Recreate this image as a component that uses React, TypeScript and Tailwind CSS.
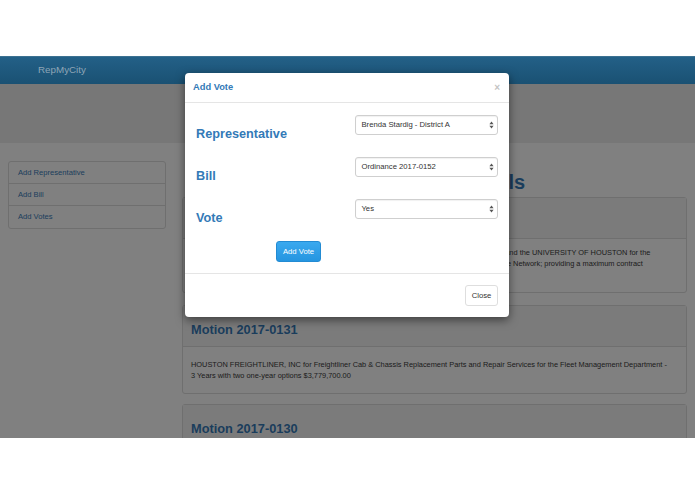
import React from "react";

const font = { fontFamily: '"Liberation Sans", Arial, sans-serif' };

function Arrows() {
  return (
    <svg width="5" height="8" viewBox="0 0 5 8" className="shrink-0">
      <path d="M2.5 0.5 L4.6 3.2 L0.4 3.2 Z" fill="#555" />
      <path d="M2.5 7.5 L4.6 4.8 L0.4 4.8 Z" fill="#555" />
    </svg>
  );
}

function Select({ value }: { value: string }) {
  return (
    <div className="w-[143px] h-[20px] border border-[#cfcfcf] rounded-[3px] bg-white shadow-[inset_0_1px_1px_rgba(0,0,0,0.06)] flex items-center justify-between pl-[5px] pr-[3px] text-[7.7px] text-[#333]">
      <span>{value}</span>
      <Arrows />
    </div>
  );
}

function FormRow({ label, value }: { label: string; value: string }) {
  return (
    <div className="h-[42px] flex items-start">
      <div className="w-[160px] pt-[12px] text-[12.7px] leading-[14px] font-bold text-[#337ab7]">{label}</div>
      <Select value={value} />
    </div>
  );
}

function Card({
  title,
  lines,
  bodyPt,
  className,
}: {
  title: string;
  lines: string[];
  bodyPt: string;
  className?: string;
}) {
  return (
    <div className={"border border-[#6f6f6f] rounded-[3px] bg-[#808080] " + (className ?? "")}>
      <div className="h-[41px] bg-[#7b7b7b] border-b border-[#6f6f6f] px-[8px] pt-[17px]">
        <div className="text-[12.8px] leading-[14px] font-bold text-[#1a3d5c]">{title}</div>
      </div>
      <div className={"px-[8px] pb-[12px] text-[7.4px] leading-[11px] text-[#1a1a1a]" + " " + bodyPt}>
        {lines.map((l, i) => (
          <div key={i} className="whitespace-nowrap">{l}</div>
        ))}
      </div>
    </div>
  );
}

export default function App() {
  return (
    <div className="w-[695px] h-[494px] bg-white flex flex-col overflow-hidden" style={font}>
      <div className="h-[56px] shrink-0" />
      <div className="h-[382px] relative overflow-hidden bg-[#808080] shrink-0">
        {/* navbar */}
        <div className="h-[28px] bg-gradient-to-b from-[#236087] to-[#1a5173] border-t border-[#3c7191] flex items-center pl-[38px]">
          <span className="text-[9.8px] text-[#8ea5b6]">RepMyCity</span>
        </div>
        {/* jumbotron */}
        <div className="h-[59px] bg-[#777777]" />
        {/* content */}
        <div className="flex pl-[8px] pr-[8px]">
          <div className="w-[158px] mt-[18px] shrink-0">
            <div className="border border-[#6f6f6f] rounded-[3px] text-[7.6px] text-[#1a3d5c]">
              <div className="h-[22px] flex items-center pl-[9px] border-b border-[#6f6f6f]">Add Representative</div>
              <div className="h-[22px] flex items-center pl-[9px] border-b border-[#6f6f6f]">Add Bill</div>
              <div className="h-[22px] flex items-center pl-[9px]">Add Votes</div>
            </div>
          </div>
          <div className="ml-[16px] w-[505px] shrink-0">
            <div className="mt-[28px] h-[22px] leading-[22px] text-[20px] font-bold text-[#1a3d5c] pl-[222px] whitespace-nowrap">
              Council Bills
            </div>
            <Card
              className="mt-[4px]"
              title="Ordinance 2017-0152"
              bodyPt="pt-[8px]"
              lines={[
                "AN ORDINANCE approving and authorizing Interlocal Agreements between the City of Houston and the UNIVERSITY OF HOUSTON for the",
                "Houston-Galveston Area Regional Radio Fire and Emergency Medical Services City Interoperable Network; providing a maximum contract",
                "amount - $1,450,000.00",
              ]}
            />
            <Card
              className="mt-[12px]"
              title="Motion 2017-0131"
              bodyPt="pt-[12px]"
              lines={[
                "HOUSTON FREIGHTLINER, INC for Freightliner Cab & Chassis Replacement Parts and Repair Services for the Fleet Management Department -",
                "3 Years with two one-year options $3,779,700.00",
              ]}
            />
            <Card className="mt-[10px]" title="Motion 2017-0130" bodyPt="pt-[12px]" lines={[]} />
          </div>
        </div>

        {/* modal */}
        <div className="absolute left-[185px] top-[17px] w-[324px] bg-white rounded-[4px] shadow-[0_3px_10px_rgba(0,0,0,0.5)]">
          <div className="h-[30px] border-b border-[#e5e5e5] flex items-center justify-between pl-[8px] pr-[9px]">
            <span className="text-[9.3px] font-bold text-[#337ab7]">Add Vote</span>
            <span className="text-[10px] text-[#c4c4c4] font-bold leading-none">×</span>
          </div>
          <div className="pt-[12px] px-[11px] pb-[11px]">
            <FormRow label="Representative" value="Brenda Stardig - District A" />
            <FormRow label="Bill" value="Ordinance 2017-0152" />
            <FormRow label="Vote" value="Yes" />
            <div className="pl-[80px]">
              <div className="w-[45px] h-[21px] rounded-[3px] bg-gradient-to-b from-[#3aa9ef] to-[#2595e0] border border-[#238bd3] text-white text-[7.7px] flex items-center justify-center">
                Add Vote
              </div>
            </div>
          </div>
          <div className="border-t border-[#e5e5e5] p-[11px] flex justify-end">
            <div className="w-[33px] h-[21px] rounded-[3px] bg-white border border-[#dedede] text-[7.7px] text-[#333] flex items-center justify-center">
              Close
            </div>
          </div>
        </div>
      </div>
      <div className="flex-1" />
    </div>
  );
}
